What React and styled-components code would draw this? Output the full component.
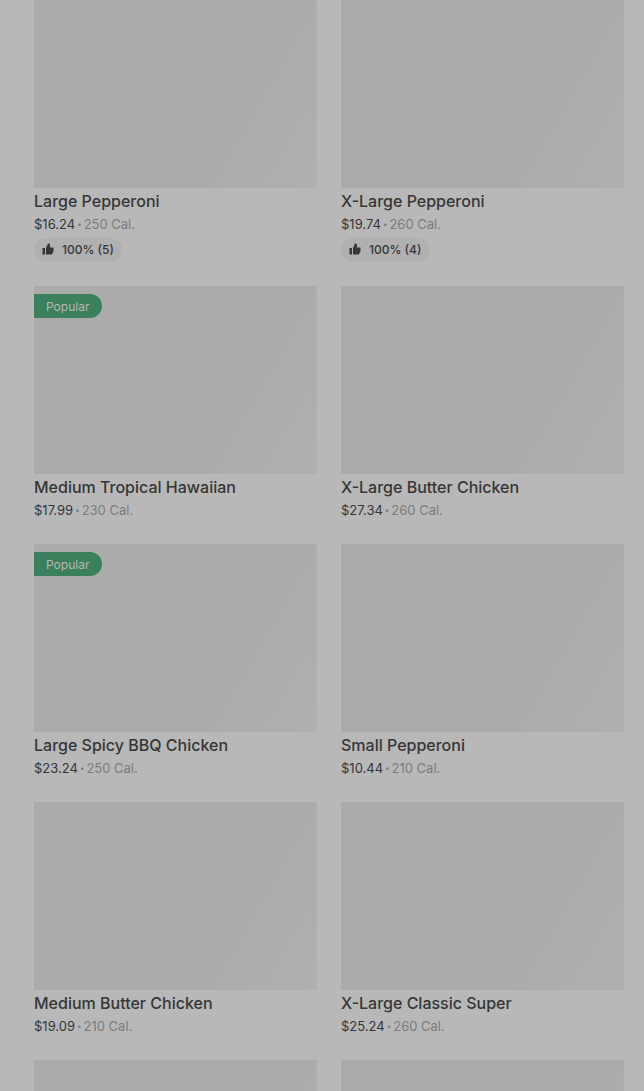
import React from "react";
import styled, { createGlobalStyle } from "styled-components";

const items = [
  { name: "Large Pepperoni", price: "$16.24", calories: "250 Cal.", rating: "100% (5)" },
  { name: "X-Large Pepperoni", price: "$19.74", calories: "260 Cal.", rating: "100% (4)" },
  { name: "Medium Tropical Hawaiian", price: "$17.99", calories: "230 Cal.", popular: true },
  { name: "X-Large Butter Chicken", price: "$27.34", calories: "260 Cal." },
  { name: "Large Spicy BBQ Chicken", price: "$23.24", calories: "250 Cal.", popular: true },
  { name: "Small Pepperoni", price: "$10.44", calories: "210 Cal." },
  { name: "Medium Butter Chicken", price: "$19.09", calories: "210 Cal." },
  { name: "X-Large Classic Super", price: "$25.24", calories: "260 Cal." },
];

function ThumbIcon() {
  return (
    <svg width="12" height="12" viewBox="0 0 24 24" fill="currentColor" aria-hidden="true">
      <path d="M1 10h5v13H1zM8 10l4-9h1c1.700 0 3 1.300 3 3v5h7v7l-3 7H8z" />
    </svg>
  );
}

function MenuItem({ item }) {
  return (
    <Card href="#item">
      <Photo>{item.popular && <Badge>Popular</Badge>}</Photo>
      <Name>{item.name}</Name>
      <Details>
        <Price>{item.price}</Price>
        <Dot>•</Dot>
        <span>{item.calories}</span>
      </Details>
      {item.rating && (
        <Rating>
          <ThumbIcon />
          {item.rating}
        </Rating>
      )}
    </Card>
  );
}

function App() {
  return (
    <>
      <GlobalStyle />
      <Page>
        <Grid>
          {items.map((item) => (
            <MenuItem key={item.name} item={item} />
          ))}
          <Photo />
          <Photo />
        </Grid>
      </Page>
    </>
  );
}

const GlobalStyle = createGlobalStyle`
  * {
    box-sizing: border-box;
  }
  body {
    margin: 0;
    background: #b8b8b8;
    color: #363636;
    font-family: Inter, "Liberation Sans", sans-serif;
  }
`;

const Page = styled.main`
  height: 100vh;
  overflow: hidden;
  padding: 0 20px 0 34px;
`;

const Grid = styled.div`
  display: grid;
  grid-template-columns: repeat(2, minmax(0, 1fr));
  gap: 24px;
`;

const Card = styled.a`
  display: block;
  color: inherit;
  text-decoration: none;
`;

const Photo = styled.div`
  height: 188px;
  padding-top: 8px;
  background: linear-gradient(120deg, #ababab 0%, #ababab 70%, #b0b0b0 100%);
`;

const Badge = styled.span`
  display: inline-flex;
  align-items: center;
  min-width: 68px;
  height: 24px;
  padding: 0 12px;
  border-radius: 0 12px 12px 0;
  background: #3a805d;
  color: #b8b8b8;
  font-size: 12px;
  vertical-align: top;
`;

const Name = styled.h3`
  margin: 2px 0;
  font-size: 16px;
  font-weight: 500;
  line-height: 22px;
  white-space: nowrap;
`;

const Details = styled.div`
  display: flex;
  gap: 2px;
  color: #7c7c7c;
  font-size: 13px;
  line-height: 20px;
`;

const Price = styled.span`
  color: #363636;
`;

const Dot = styled.span`
  font-size: 8px;
`;

const Rating = styled.div`
  display: inline-flex;
  align-items: center;
  gap: 8px;
  height: 24px;
  margin-top: 4px;
  padding: 0 8px 2px;
  border-radius: 12px;
  background: #b0b0b0;
  font-size: 12px;
  font-weight: 500;
  vertical-align: top;
`;

export default App;
